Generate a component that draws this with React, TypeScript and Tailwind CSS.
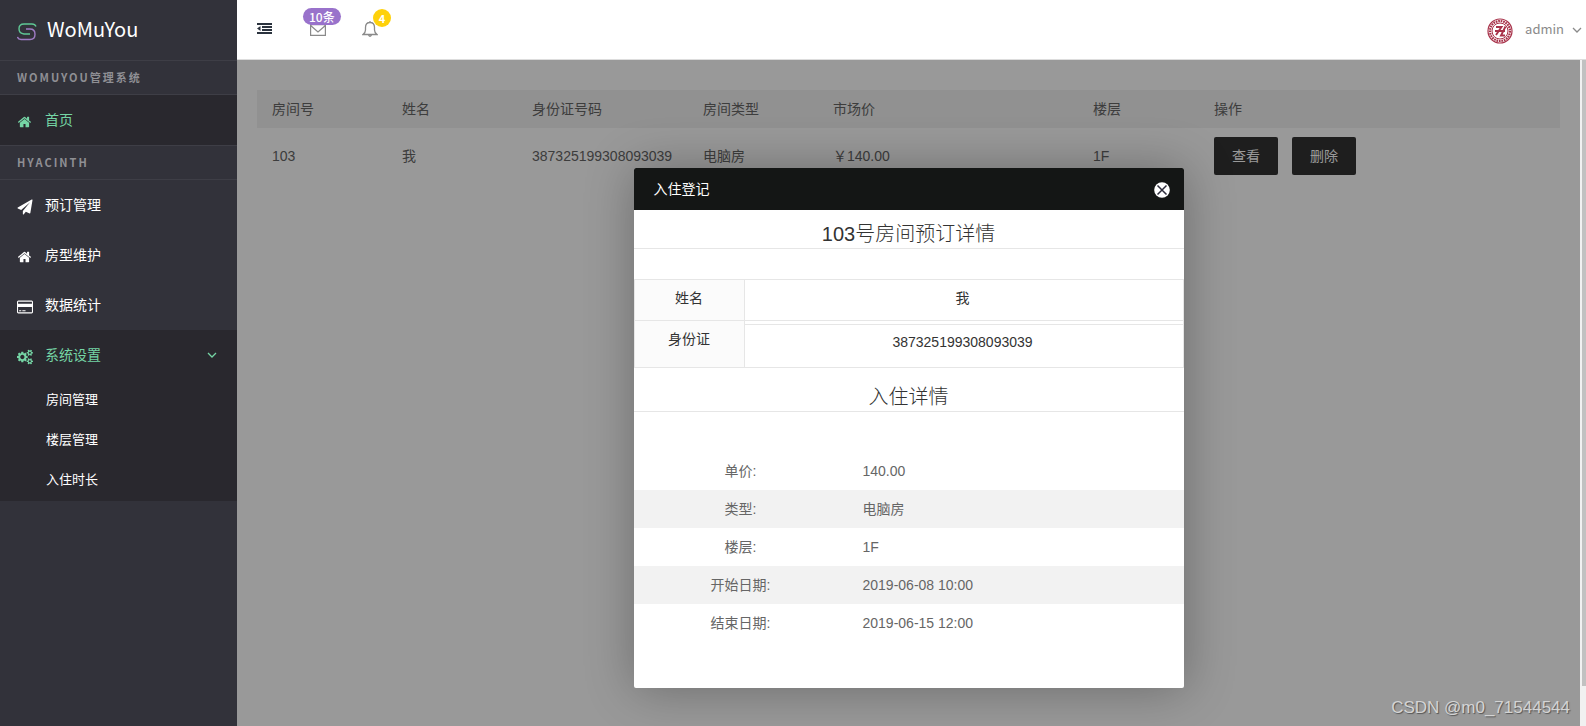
import { useState } from 'react'
import type { ReactNode } from 'react'
import clsx from 'clsx'

const icons = {
  home: {
    viewBox: '-40 -100 1872 1992',
    d: 'M1408 992v480q0 26-19 45t-45 19h-384v-384h-256v384h-384q-26 0-45-19t-19-45v-480q0-1 .5-3t.5-3l575-474 575 474q1 2 1 6zm223-69l-62 74q-8 9-21 11h-3q-13 0-21-7l-692-577-692 577q-12 8-24 7-13-2-21-11l-62-74q-8-10-7-23.5t11-21.5l719-599q32-26 76-26t76 26l244 204v-195q0-14 9-23t23-9h192q14 0 23 9t9 23v408l219 182q10 8 11 21.5t-7 23.5z',
  },
  plane: {
    viewBox: '-60 -60 1912 1912',
    d: 'M1764 11q33 24 27 64l-256 1536q-5 29-32 45-14 8-31 8-11 0-24-5l-453-185-242 295q-18 23-49 23-13 0-22-4-19-7-30.5-23.5t-11.5-36.5v-349l864-1059-1069 925-395-162q-37-14-40-55-2-40 32-59l1664-960q15-9 32-9 20 0 36 11z',
  },
  card: {
    viewBox: '0 0 1920 1792',
    d: 'M1760 128q66 0 113 47t47 113v1216q0 66-47 113t-113 47h-1600q-66 0-113-47t-47-113v-1216q0-66 47-113t113-47h1600zm-1600 128q-13 0-22.500 9.500t-9.500 22.500v224h1664v-224q0-13-9.500-22.500t-22.500-9.500h-1600zm1600 1280q13 0 22.500-9.500t9.500-22.500v-608h-1664v608q0 13 9.500 22.500t22.500 9.500h1600zm-1504-128v-128h256v128h-256zm384 0v-128h384v128h-384z',
  },
  cogs: {
    viewBox: '0 0 1920 1792',
    d: 'M896 896q0-106-75-181t-181-75-181 75-75 181 75 181 181 75 181-75 75-181zm768 512q0-52-38-90t-90-38-90 38-38 90q0 53 37.500 90.500t90.500 37.500 90.500-37.500 37.500-90.500zm0-1024q0-52-38-90t-90-38-90 38-38 90q0 53 37.500 90.500t90.500 37.500 90.500-37.500 37.500-90.500zm-384 421v185q0 10-7 19.500t-16 10.500l-155 24q-11 35-32 76 34 48 90 115 7 11 7 20 0 12-7 19-23 30-82.500 89.500t-78.500 59.500q-11 0-21-7l-115-90q-37 19-77 31-11 108-23 155-7 24-30 24h-186q-11 0-20-7.500t-10-17.500l-23-153q-34-10-75-31l-118 89q-7 7-20 7-11 0-21-8-144-133-144-160 0-9 7-19 10-14 41-53t47-61q-23-44-35-82l-152-24q-10-1-17-9.500t-7-19.500v-185q0-10 7-19.500t16-10.500l155-24q11-35 32-76-34-48-90-115-7-11-7-20 0-12 7-20 22-30 82-89t79-59q11 0 21 7l115 90q34-18 77-32 11-108 23-154 7-24 30-24h186q11 0 20 7.500t10 17.500l23 153q34 10 75 31l118-89q8-7 20-7 11 0 21 8 144 133 144 160 0 9-7 19-12 16-42 54t-45 60q23 48 34 82l152 23q10 2 17 10.500t7 19.500zm640 533v140q0 16-149 31-12 27-30 52 51 113 51 138 0 4-4 7-122 71-124 71-8 0-46-47t-52-68q-20 2-30 2t-30-2q-14 21-52 68t-46 47q-2 0-124-71-4-3-4-7 0-25 51-138-18-25-30-52-149-15-149-31v-140q0-16 149-31 13-29 30-52-51-113-51-138 0-4 4-7 4-2 35-20t59-34 30-16q8 0 46 46.500t52 67.500q20-2 30-2t30 2q51-71 92-112l6-2q4 0 124 70 4 3 4 7 0 25-51 138 17 23 30 52 149 15 149 31zm0-1024v140q0 16-149 31-12 27-30 52 51 113 51 138 0 4-4 7-122 71-124 71-8 0-46-47t-52-68q-20 2-30 2t-30-2q-14 21-52 68t-46 47q-2 0-124-71-4-3-4-7 0-25 51-138-18-25-30-52-149-15-149-31v-140q0-16 149-31 13-29 30-52-51-113-51-138 0-4 4-7 4-2 35-20t59-34 30-16q8 0 46 46.500t52 67.500q20-2 30-2t30 2q51-71 92-112l6-2q4 0 124 70 4 3 4 7 0 25-51 138 17 23 30 52 149 15 149 31z',
  },
}

type IconName = keyof typeof icons

const menu: { icon: IconName; label: string }[] = [
  { icon: 'plane', label: '预订管理' },
  { icon: 'home', label: '房型维护' },
  { icon: 'card', label: '数据统计' },
]

const subMenu = ['房间管理', '楼层管理', '入住时长']

const columns = [
  { title: '房间号', width: 'w-[130px]' },
  { title: '姓名', width: 'w-[130px]' },
  { title: '身份证号码', width: 'w-[171px]' },
  { title: '房间类型', width: 'w-[130px]' },
  { title: '市场价', width: 'w-[260px]' },
  { title: '楼层', width: 'w-[121px]' },
  { title: '操作', width: 'w-auto' },
]

const rooms = [
  { no: '103', name: '我', idCard: '387325199308093039', type: '电脑房', price: '￥140.00', floor: '1F' },
]

const details = [
  ['单价:', '140.00'],
  ['类型:', '电脑房'],
  ['楼层:', '1F'],
  ['开始日期:', '2019-06-08 10:00'],
  ['结束日期:', '2019-06-15 12:00'],
]

function Icon({ name }: { name: IconName }) {
  return (
    <svg viewBox={icons[name].viewBox} className="w-4 h-4 mt-1" fill="currentColor" aria-hidden="true">
      <path d={icons[name].d} />
    </svg>
  )
}

function Chevron({ className }: { className?: string }) {
  return (
    <svg viewBox="0 0 10 10" className={clsx('w-[10px] h-[10px]', className)} fill="none" stroke="currentColor" strokeWidth="1.3" aria-hidden="true">
      <path d="M1 3l4 4 4-4" />
    </svg>
  )
}

function SectionLabel({ children }: { children: ReactNode }) {
  return (
    <div className="h-[34px] px-[17px] border-b border-[#3e3e46] flex items-center text-[11px] font-bold tracking-[2px] text-[#8f8f94]">
      {children}
    </div>
  )
}

function NavItem({ icon, label, active }: { icon: IconName; label: string; active?: boolean }) {
  return (
    <a href="#" className={clsx('h-[50px] px-[17px] flex items-center gap-3 text-sm', active ? 'bg-[#29282e] text-[#75d5a5]' : 'text-white')}>
      <Icon name={icon} />
      <span className="pb-[2px]">{label}</span>
    </a>
  )
}

function Sidebar() {
  const [open, setOpen] = useState(true)
  return (
    <aside className="w-[237px] shrink-0 bg-[#32323a] font-['Noto_Sans_CJK_SC',sans-serif]">
      <div className="h-[61px] px-[17px] border-b border-[#3e3e46] flex items-center gap-[10px]">
        <svg viewBox="0 0 20 18" className="w-5 h-[18px] mt-1" fill="none" strokeWidth="1.4" aria-hidden="true">
          <path d="M19 3.500Q18 1 15 1H7Q2 1 2 5.800T7 11h6" stroke="#5fc795" />
          <path d="M9 6h4q5 0 5 5.200T13 16.500H4q-3 0-3.500-2.500" stroke="#a07cc5" />
        </svg>
        <span className="pb-[2px] text-xl text-white">WoMuYou</span>
      </div>
      <nav>
        <SectionLabel>WOMUYOU管理系统</SectionLabel>
        <div className="border-b border-[#3e3e46]">
          <NavItem icon="home" label="首页" active />
        </div>
        <SectionLabel>HYACINTH</SectionLabel>
        {menu.map(m => <NavItem key={m.label} icon={m.icon} label={m.label} />)}
        <div className="pb-px bg-[#29282e]">
          <button onClick={() => setOpen(o => !o)} className="w-full h-[50px] pl-[17px] pr-5 flex items-center gap-3 text-sm text-[#75d5a5]">
            <Icon name="cogs" />
            <span className="pb-[2px]">系统设置</span>
            <Chevron className="ml-auto" />
          </button>
          {open && (
            <ul>
              {subMenu.map(s => (
                <li key={s}>
                  <a href="#" className="h-10 pl-[46px] pb-[3px] flex items-center text-[13px] text-white">{s}</a>
                </li>
              ))}
            </ul>
          )}
        </div>
      </nav>
    </aside>
  )
}

function Topbar() {
  return (
    <header className="h-[60px] shrink-0 bg-white border-b border-[#dddddd] flex items-center pl-5 pr-1 font-['Noto_Sans_CJK_SC',sans-serif]">
      <button aria-label="收起菜单" className="text-[#2b333e]">
        <svg viewBox="0 0 15 11" className="w-[15px] h-[11px] mb-[2px]" fill="currentColor" aria-hidden="true">
          <path d="M0 0h15v2H0zM5 3h10v2H5zM5 6h10v2H5zM0 9h15v2H0zM3.500 3v5L0 5.500z" />
        </svg>
      </button>
      <button aria-label="消息" className="relative ml-[38px] text-[#8a8a8a]">
        <svg viewBox="0 0 16 12" className="w-4 h-3" fill="none" stroke="currentColor" strokeWidth="1.2" aria-hidden="true">
          <path d="M.6.6h14.800v10.800H.6zM.6 1.500L8 8l7.400-6.500" />
        </svg>
        <span className="absolute -top-4 -left-[7px] h-[17px] px-[6px] rounded-full bg-[#9972cb] text-white text-xs font-medium leading-[17px] whitespace-nowrap">10条</span>
      </button>
      <button aria-label="通知" className="relative ml-9 text-[#8a8a8a]">
        <svg viewBox="0 0 16 16" className="w-4 h-4 mb-[2px]" fill="none" stroke="currentColor" strokeWidth="1.300" aria-hidden="true">
          <path d="M8 0v1.500M3.500 9V6.500Q3.500 1.500 8 1.500t4.500 5V9q0 2.500 2.500 4.500H1Q3.500 11.500 3.500 9zM6.500 14q1.500 2.500 3 0" />
        </svg>
        <span className="absolute -top-3 left-[11px] w-[18px] h-[18px] rounded-full bg-[#fed10b] text-white text-[11px] font-bold leading-[18px] text-center">4</span>
      </button>
      <button className="ml-auto flex items-center text-[13px] text-[#8a8a8a]">
        <svg viewBox="0 0 26 26" className="w-[26px] h-[26px] mt-[2px] mr-3" fill="none" stroke="#a8324a" aria-hidden="true">
          <circle cx="13" cy="13" r="12" strokeWidth="1.200" />
          <circle cx="13" cy="13" r="10" strokeWidth="2.200" strokeDasharray="1.700 .8" />
          <circle cx="13" cy="13" r="8" strokeWidth="1" />
          <path d="M9 9h5.500L9 17M8 13h10M18.500 8.500L14 17.500h4" strokeWidth="1.900" />
        </svg>
        <span className="pb-[2px]">admin</span>
        <Chevron className="ml-2" />
      </button>
    </header>
  )
}

function RoomTable({ onView }: { onView: () => void }) {
  return (
    <table className="w-full table-fixed text-left text-sm leading-5 text-[#666]">
      <thead className="bg-[#f2f2f2]">
        <tr>
          {columns.map(c => <th key={c.title} className={clsx('px-[15px] py-[9px] font-normal', c.width)}>{c.title}</th>)}
        </tr>
      </thead>
      <tbody>
        {rooms.map(r => (
          <tr key={r.no}>
            <td className="px-[15px] py-[9px]">{r.no}</td>
            <td className="px-[15px] py-[9px]">{r.name}</td>
            <td className="px-[15px] py-[9px]">{r.idCard}</td>
            <td className="px-[15px] py-[9px]">{r.type}</td>
            <td className="px-[15px] py-[9px]">{r.price}</td>
            <td className="px-[15px] py-[9px]">{r.floor}</td>
            <td className="px-[15px] py-[9px]">
              <div className="flex gap-[14px]">
                <button onClick={onView} className="h-[38px] px-[18px] rounded-xs bg-[#333] text-white">查看</button>
                <button className="h-[38px] px-[18px] rounded-xs bg-[#333] text-white">删除</button>
              </div>
            </td>
          </tr>
        ))}
      </tbody>
    </table>
  )
}

function BookingDialog({ onClose }: { onClose: () => void }) {
  return (
    <div role="dialog" aria-labelledby="dialog-title" className="w-[550px] pb-[46px] bg-white rounded-xs overflow-hidden shadow-[1px_1px_50px_rgba(0,0,0,0.3)] text-sm text-[#333]">
      <div className="h-[42px] pl-5 pr-[14px] flex items-center justify-between bg-[#141615] text-white">
        <span id="dialog-title">入住登记</span>
        <button onClick={onClose} aria-label="关闭">
          <svg viewBox="0 0 16 16" className="w-4 h-4 mt-[2px]" aria-hidden="true">
            <circle cx="8" cy="8" r="7.800" fill="#fff" />
            <path d="M3.500 3.500l9 9M12.500 3.500l-9 9" stroke="#2e2d3c" strokeWidth="1.500" />
          </svg>
        </button>
      </div>

      <h2 className="pt-[10px] border-b border-[#e6e6e6] text-center text-xl leading-7 font-light">103号房间预订详情</h2>

      <div className="mt-[30px] border border-[#e6e6e6]">
        <div className="flex h-[41px] border-b border-[#e6e6e6]">
          <label htmlFor="guest" className="w-[110px] pt-2 bg-[#fbfbfb] border-r border-[#e6e6e6] text-center leading-5">姓名</label>
          <input id="guest" readOnly defaultValue="我" className="flex-1 min-w-0 h-[34px] pr-[2px] text-center outline-none" />
        </div>
        <div className="flex h-[46px]">
          <label htmlFor="id-card" className="w-[110px] pt-2 bg-[#fbfbfb] border-r border-[#e6e6e6] text-center leading-5">身份证</label>
          <div className="flex-1 min-w-0 pt-[3px]">
            <input id="id-card" readOnly defaultValue="387325199308093039" className="w-full h-[34px] pr-[2px] border-t border-[#e6e6e6] text-center outline-none" />
          </div>
        </div>
      </div>

      <h2 className="pt-[15px] border-b border-[#e6e6e6] text-center text-xl leading-7 font-light">入住详情</h2>

      <table className="w-full mt-10 leading-5 text-[#666]">
        <tbody>
          {details.map(([label, value]) => (
            <tr key={label} className="even:bg-[#f2f2f2]">
              <th scope="row" className="w-[214px] py-[9px] font-normal text-center">{label}</th>
              <td className="px-[15px] py-[9px]">{value}</td>
            </tr>
          ))}
        </tbody>
      </table>
    </div>
  )
}

export default function App() {
  const [showDialog, setShowDialog] = useState(true)

  return (
    <div className="flex min-h-screen font-['Liberation_Sans','Noto_Sans_CJK_SC',sans-serif]">
      <Sidebar />
      <div className="flex-1 min-w-0 flex flex-col">
        <Topbar />
        <div className="flex-1 flex">
          <main className="relative flex-1 min-w-0 px-5 py-[30px] bg-white">
            <RoomTable onView={() => setShowDialog(true)} />
            {showDialog && (
              <div className="absolute inset-0 flex justify-center items-start pt-[108px] bg-black/40">
                <BookingDialog onClose={() => setShowDialog(false)} />
              </div>
            )}
            <span className="absolute right-[10px] bottom-[6px] text-[17px] leading-6 text-[#d4d4d4] [text-shadow:1px_1px_1px_#555]">CSDN @m0_71544544</span>
          </main>
          {/* scrollbar */}
          <div className="w-[6px] pl-[2px] bg-[#f1f1f1]">
            <div className="h-[94%] bg-[#c1c1c1]" />
          </div>
        </div>
      </div>
    </div>
  )
}
